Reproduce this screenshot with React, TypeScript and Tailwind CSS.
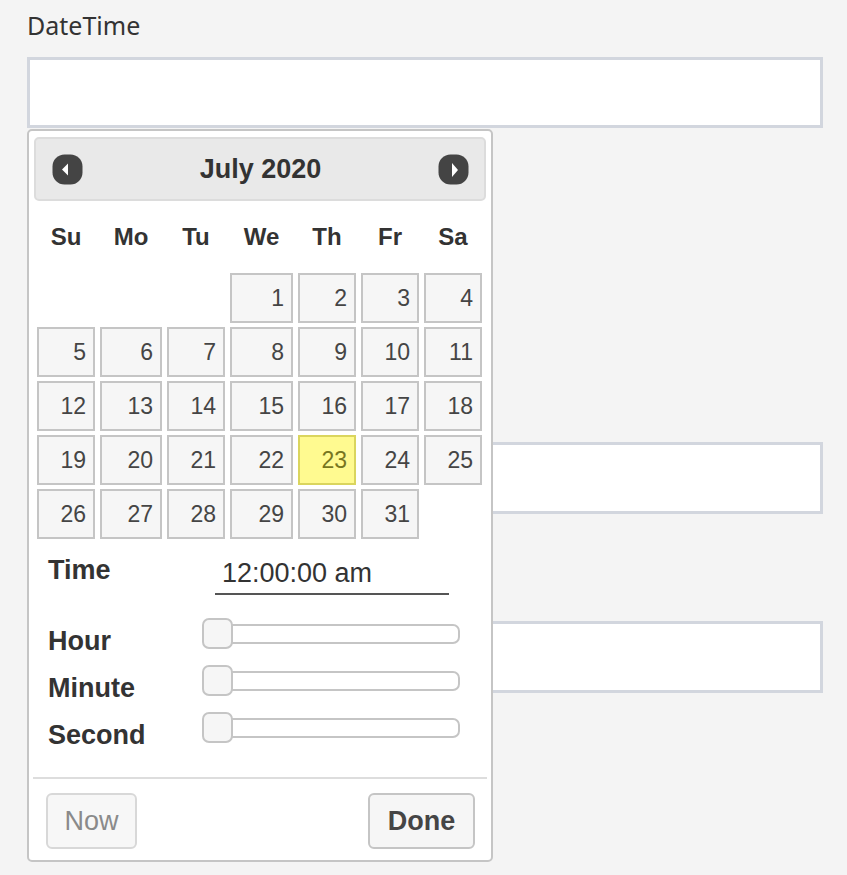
import React from "react";

const colW = ["w-[58px]", "w-[62px]", "w-[58px]", "w-[63px]", "w-[58px]", "w-[58px]", "w-[58px]"];
const heads = ["Su", "Mo", "Tu", "We", "Th", "Fr", "Sa"];

function Slider() {
  return (
    <div className="relative w-[258px] h-full flex items-center">
      <div className="w-full h-[20px] border-2 border-[#c5c5c5] rounded-[7px] bg-white" />
      <div className="absolute left-0 top-[8px] w-[31px] h-[31px] rounded-[7px] border-2 border-[#c5c5c5] bg-[#f6f6f6]" />
    </div>
  );
}

export default function App() {
  const cells: (number | null)[] = [null, null, null];
  for (let d = 1; d <= 31; d++) cells.push(d);
  cells.push(null);

  return (
    <div className="relative min-h-screen w-full bg-[#f4f4f4] font-['Noto_Sans',sans-serif]">
      <div className="pl-[27px] pt-[8px]">
        <div className="text-[25px] leading-[34px] text-[#333]">DateTime</div>
        <div className="mt-[15px] h-[71px] w-[796px] border-[3px] border-[#d2d6de] bg-white" />
        <div className="mt-[314px] h-[72px] w-[796px] border-[3px] border-[#d2d6de] bg-white" />
        <div className="mt-[107px] h-[72px] w-[796px] border-[3px] border-[#d2d6de] bg-white" />
      </div>

      <div className="absolute left-[27px] top-[129px] w-[466px] h-[733px] border-2 border-[#c5c5c5] rounded-[5px] bg-white font-['Liberation_Sans',Arial,sans-serif]">
        {/* header */}
        <div className="mx-[5px] mt-[6px] h-[64px] border-2 border-[#dcdcdc] rounded-[5px] bg-[#e9e9e9] flex items-center justify-between pl-[16px] pr-[15px]">
          <svg width="31" height="31" viewBox="0 0 31 31">
            <rect x="0.5" y="0.5" width="30" height="30" rx="12" fill="#444" />
            <polygon points="16,9.5 16,21.5 10,15.5" fill="#fff" />
          </svg>
          <div className="text-[27px] font-bold text-[#333] leading-[30px]">July 2020</div>
          <svg width="31" height="31" viewBox="0 0 31 31">
            <rect x="0.5" y="0.5" width="30" height="30" rx="12" fill="#444" />
            <polygon points="14,9 14,23 20,16" fill="#fff" />
          </svg>
        </div>

        {/* calendar */}
        <div className="ml-[8px]">
          <div className="mt-[22px] flex gap-x-[5px] h-[27px]">
            {heads.map((h, i) => (
              <div key={h} className={`${colW[i]} text-center text-[24px] font-bold leading-[27px] text-[#333]`}>
                {h}
              </div>
            ))}
          </div>
          <div className="mt-[23px] grid grid-cols-[58px_62px_58px_63px_58px_58px_58px] gap-x-[5px] gap-y-[4px]">
            {cells.map((d, i) =>
              d === null ? (
                <div key={i} className="h-[50px]" />
              ) : (
                <div
                  key={i}
                  className={
                    d === 23
                      ? "h-[50px] border-2 border-[#dad55e] bg-[#fffa90] text-[#777620] flex items-center justify-end pr-[7px] text-[23px]"
                      : "h-[50px] border-2 border-[#c5c5c5] bg-[#f6f6f6] text-[#454545] flex items-center justify-end pr-[7px] text-[23px]"
                  }
                >
                  {d}
                </div>
              )
            )}
          </div>
        </div>

        {/* time */}
        <div className="pl-[19px]">
          <div className="mt-[16px] flex items-start">
            <div className="w-[154px] text-[27px] font-bold leading-[30px] text-[#333]">Time</div>
            <div className="ml-[13px] mt-[3px] w-[234px] h-[37px] border-b-2 border-[#555] pl-[7px] text-[27px] leading-[30px] text-[#333]">
              12:00:00 am
            </div>
          </div>
          <div className="mt-[15px]">
            {["Hour", "Minute", "Second"].map((l) => (
              <div key={l} className="flex h-[47px]">
                <div className="w-[154px] pt-[16px] text-[27px] font-bold leading-[30px] text-[#333]">{l}</div>
                <Slider />
              </div>
            ))}
          </div>
        </div>

        <div className="mt-[26px] mx-[4px] h-[2px] bg-[#dddddd]" />

        <div className="mt-[14px] flex justify-between pl-[17px] pr-[16px]">
          <div className="w-[91px] h-[56px] rounded-[6px] border-2 border-[#d8d8d8] bg-[#f7f7f7] text-[#8a8a8a] text-[27px] flex items-center justify-center">
            Now
          </div>
          <div className="w-[107px] h-[56px] rounded-[6px] border-2 border-[#c5c5c5] bg-[#f6f6f6] text-[#454545] text-[27px] font-bold flex items-center justify-center">
            Done
          </div>
        </div>
      </div>
    </div>
  );
}
